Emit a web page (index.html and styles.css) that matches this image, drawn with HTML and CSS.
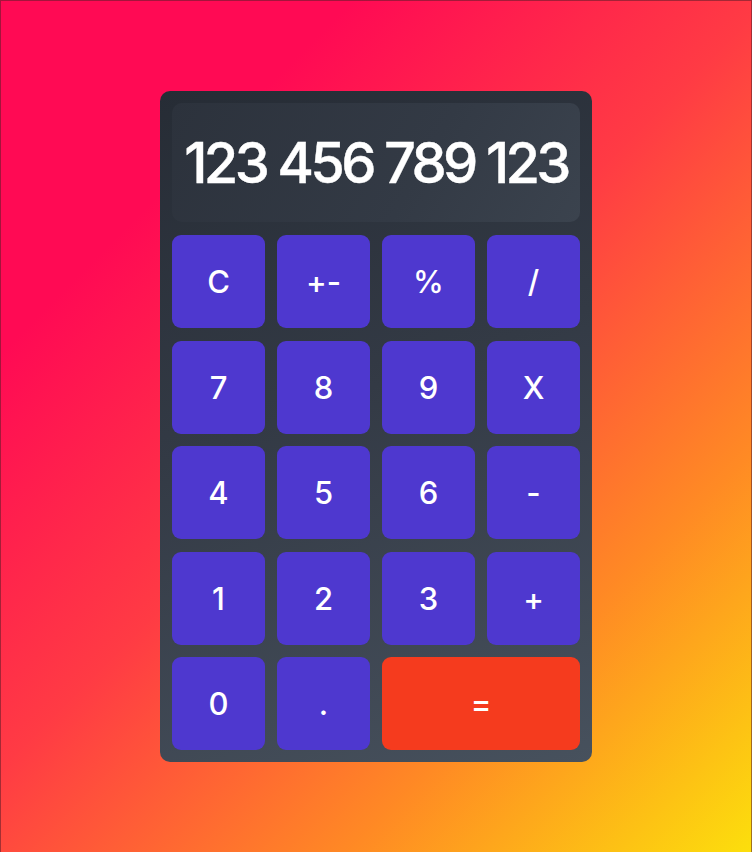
FILE: index.html
```html
<!DOCTYPE html>
<html lang="en">
<head>
<meta charset="utf-8">
<title>Calculator</title>
<link rel="stylesheet" href="styles.css">
</head>
<body>
<main class="page">
  <div class="calculator">
    <div class="display"><span class="display-value">123 456 789 123</span></div>
    <div class="keys">
      <button class="key">C</button>
      <button class="key">+-</button>
      <button class="key">%</button>
      <button class="key">/</button>
      <button class="key">7</button>
      <button class="key">8</button>
      <button class="key">9</button>
      <button class="key">X</button>
      <button class="key">4</button>
      <button class="key">5</button>
      <button class="key">6</button>
      <button class="key">-</button>
      <button class="key">1</button>
      <button class="key">2</button>
      <button class="key">3</button>
      <button class="key">+</button>
      <button class="key">0</button>
      <button class="key">.</button>
      <button class="key key-equals">=</button>
    </div>
  </div>
</main>
</body>
</html>
```

FILE: styles.css
```css
* {
  box-sizing: border-box;
}

html, body {
  margin: 0;
  padding: 0;
  height: 100%;
}

body {
  font-family: Inter, "Open Sans", "Liberation Sans", sans-serif;
  background: linear-gradient(135deg, #ff0a54 22%, #ff3b44 48%, #ff8a24 75%, #fcdf0c 100%);
}

.page {
  height: 852px;
  display: flex;
  align-items: center;
  justify-content: center;
  border: 1px solid rgba(90, 30, 40, 0.55);
  border-bottom: none;
}

.calculator {
  width: 432px;
  padding: 12px;
  border-radius: 10px;
  background: linear-gradient(160deg, #262c35 0%, #333a45 45%, #47515d 100%);
  display: flex;
  flex-direction: column;
  gap: 13px;
}

.display {
  height: 119px;
  border-radius: 10px;
  background: linear-gradient(120deg, #2c323c 0%, #333a45 60%, #3b434e 100%);
  display: flex;
  align-items: center;
  justify-content: center;
  overflow: hidden;
}

.display-value {
  color: #ffffff;
  font-size: 56px;
  font-weight: 500;
  letter-spacing: -3.7px;
  white-space: nowrap;
  -webkit-text-stroke: 0.4px #ffffff;
}

.keys {
  display: grid;
  grid-template-columns: repeat(4, 1fr);
  grid-auto-rows: 93px;
  column-gap: 12px;
  row-gap: 12.5px;
}

.key {
  border: none;
  border-radius: 9px;
  background: #4e38cf;
  color: #ffffff;
  font-family: inherit;
  font-size: 31px;
  font-weight: 500;
  padding: 0;
  cursor: pointer;
}

.key-equals {
  grid-column: span 2;
  background: #f53b1e;
}
```
